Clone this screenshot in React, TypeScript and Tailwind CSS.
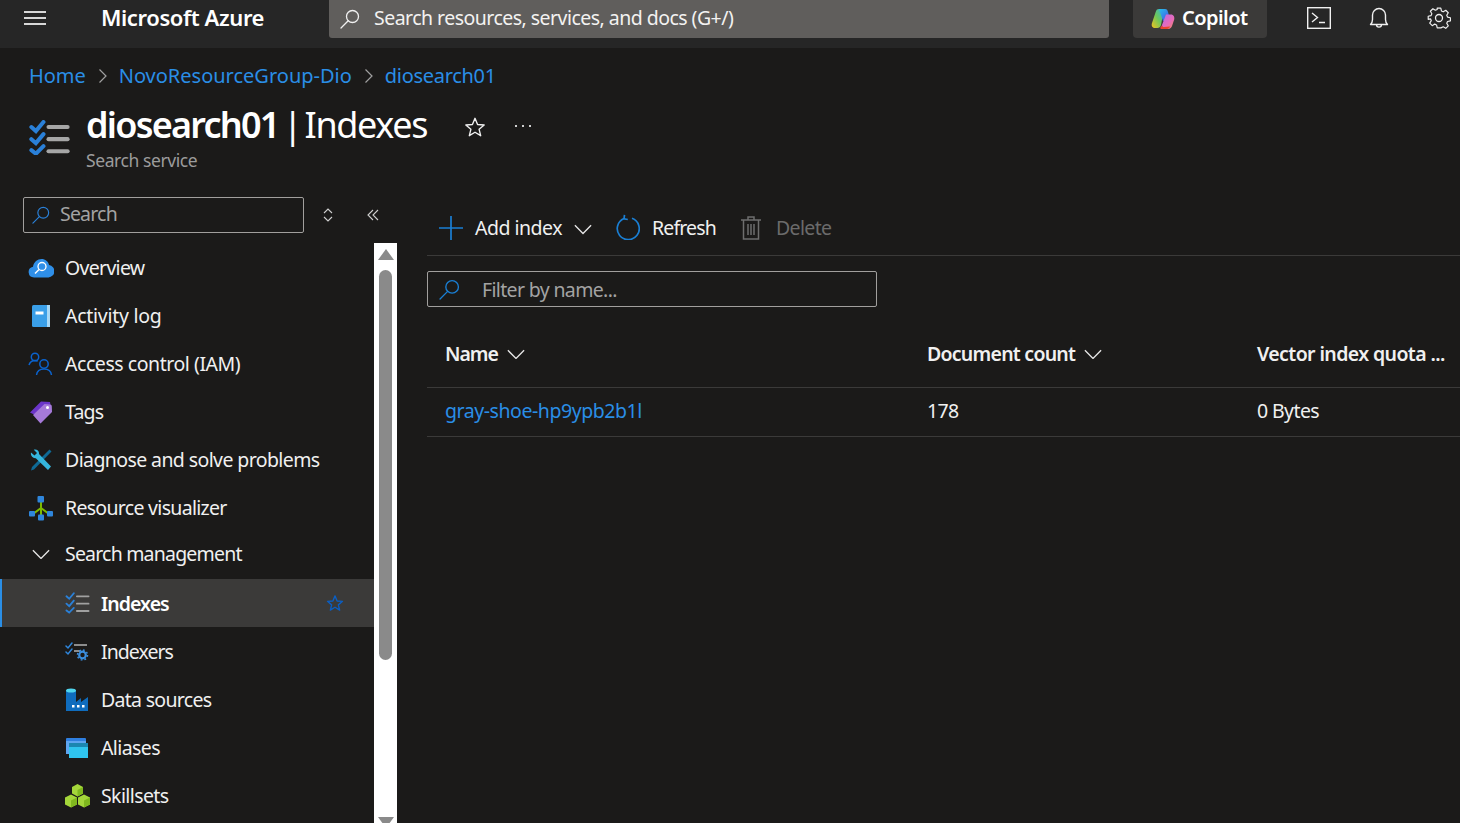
import { ReactNode } from 'react'

const font = { fontFamily: '"Noto Sans", "Open Sans", sans-serif' }

function SearchGlass({ color, size = 20 }: { color: string; size?: number }) {
  return (
    <svg width={size} height={size} viewBox="0 0 20 20" fill="none" stroke={color} strokeWidth="1.3">
      <circle cx="12.5" cy="7.5" r="6" />
      <path d="M8.2 11.8 1 19" strokeLinecap="round" />
    </svg>
  )
}

function Chevron({ size = 18, className = '' }: { size?: number; className?: string }) {
  return (
    <svg width={size} height={size * 0.6} viewBox="0 0 20 12" fill="none" stroke="#e6e6e6" strokeWidth="1.5" className={className}>
      <path d="M1 1.5 10 10.5 19 1.5" />
    </svg>
  )
}

function ChecklistIcon({ w, bar, check, weight = 4 }: { w: number; bar: string; check: string; weight?: number }) {
  return (
    <svg width={w} height={w * 0.86} viewBox="0 0 40 35" fill="none">
      <g stroke={check} strokeWidth={weight} strokeLinecap="round">
        <path d="M2 7 6.500 11 14 2" />
        <path d="M2 19 6.500 23 14 14" />
        <path d="M2 30 6.500 33.500 14 26" />
      </g>
      <g stroke={bar} strokeWidth={weight} strokeLinecap="round">
        <path d="M19 7H38" />
        <path d="M19 19H38" />
        <path d="M19 31H38" />
      </g>
    </svg>
  )
}

const OverviewIcon = (
  <svg width="26" height="20" viewBox="0 0 26 20">
    <path d="M6 19.5a5.4 5.4 0 0 1-1-10.7C5.8 4 9.5 1 13.500 1c3.800 0 6.800 2.500 7.600 6a6.300 6.300 0 0 1-.6 12.500Z" fill="#2f8fe8" />
    <circle cx="14" cy="8.500" r="4" fill="none" stroke="#fff" strokeWidth="1.300" />
    <path d="M11 11.500 7 15.500" stroke="#fff" strokeWidth="1.500" />
  </svg>
)

const ActivityIcon = (
  <svg width="20" height="24" viewBox="0 0 20 24">
    <rect x="1" y="1" width="18" height="22" rx="1.500" fill="#3a9fe8" />
    <rect x="16" y="1" width="3" height="22" fill="#a8d8f5" />
    <rect x="4.500" y="7.500" width="8" height="3" fill="#fff" />
  </svg>
)

const AccessIcon = (
  <svg width="26" height="24" viewBox="0 0 26 24" fill="none" stroke="#0b63ce" strokeWidth="1.500">
    <circle cx="7" cy="5" r="3.700" />
    <path d="M1 13c1-3 3-4.500 6-4.500 1 0 2 .2 2.800.6" />
    <circle cx="16" cy="12" r="4.200" />
    <path d="M8.500 23c.5-3.800 3.500-6 7.500-6s7 2.200 7.500 6" />
  </svg>
)

const TagsIcon = (
  <svg width="24" height="24" viewBox="0 0 24 24">
    <path d="M1 12.500 12 1.500l9 .5.500 3L10 17Z" fill="#6b35c9" />
    <path d="M4 15 15.500 4l5.500.500c1.500 0 1.800 1 1.800 2l.2 5.500L11.500 23.500Z" fill="#a67ad9" />
    <circle cx="18.500" cy="7.500" r="1.500" fill="#fff" />
  </svg>
)

const DiagnoseIcon = (
  <svg width="22" height="22" viewBox="0 0 22 22">
    <path d="M19.500 .500 21.500 2.500 4 20.500 1 21.500 2 18Z" fill="#0f6a96" />
    <path d="M1 3.500 4.500 6.500 7 4 3.800 .800C6.500-.2 9.500 2 9 5L21 17.500 18 21 5.800 9.200C3 9.800 .2 6.500 1 3.500Z" fill="#35b6dd" />
  </svg>
)

const VisualizerIcon = (
  <svg width="26" height="26" viewBox="0 0 26 26">
    <path d="M13 6V20M13 13 5 19M13 13 21 19" stroke="#7fba00" strokeWidth="2" fill="none" />
    <rect x="9.500" y="1" width="6.500" height="6.500" rx="1" fill="#2f86dc" />
    <rect x="1" y="16" width="6" height="5.500" rx="1" fill="#2f86dc" />
    <rect x="10" y="19.500" width="6" height="6" rx="1" fill="#2f86dc" />
    <rect x="19" y="16" width="6" height="5.500" rx="1" fill="#2f86dc" />
  </svg>
)

const IndexersIcon = (
  <svg width="24" height="20" viewBox="0 0 24 20" fill="none">
    <path d="M1 4 3 6 7 1M1 10 3 12 7 7" stroke="#2f86dc" strokeWidth="1.500" strokeLinecap="round" />
    <path d="M9 3H22M9 9H15" stroke="#8c8c8c" strokeWidth="2" />
    <circle cx="17.500" cy="13" r="3.300" stroke="#3b8fe0" strokeWidth="2.200" />
    <circle cx="17.500" cy="13" r="5" stroke="#3b8fe0" strokeWidth="1.500" strokeDasharray="1.800 2.100" />
  </svg>
)

const DataSourcesIcon = (
  <svg width="24" height="24" viewBox="0 0 24 24">
    <rect x="1" y="2" width="10" height="21" fill="#0f6cbd" />
    <ellipse cx="6" cy="2.500" rx="5" ry="2" fill="#50d5ee" />
    <path d="M1 23V14H11L16 10V14L23 9V23Z" fill="#0f6cbd" />
    <rect x="7" y="17" width="2.500" height="2.500" fill="#fff" />
    <rect x="12" y="17" width="2.500" height="2.500" fill="#fff" />
    <rect x="17" y="17" width="2.500" height="2.500" fill="#fff" />
  </svg>
)

const AliasesIcon = (
  <svg width="24" height="22" viewBox="0 0 24 22">
    <rect x="1" y="1" width="20" height="16" rx="1" fill="#2f7fe0" />
    <rect x="1" y="4" width="20" height="13" fill="#5ea5ef" />
    <rect x="4" y="6" width="19" height="15" fill="#2fc4ee" />
    <rect x="4" y="6" width="19" height="4" fill="#1b86b0" />
  </svg>
)

const SkillsetsIcon = (
  <svg width="25" height="24" viewBox="0 0 25 24">
    <path d="M12.500 0 18 3V9.500L12.500 12.500 7 9.500V3Z" fill="#a4d63a" />
    <path d="M12.500 6 18 3V9.500L12.500 12.500Z" fill="#7fb81e" />
    <path d="M6 10.500 12 13.500V20.500L6 23.500 0 20.500V13.500Z" fill="#a4d63a" />
    <path d="M6 16.500 12 13.500V20.500L6 23.500Z" fill="#7fb81e" />
    <path d="M19 10.500 25 13.500V20.500L19 23.500 13 20.500V13.500Z" fill="#a4d63a" />
    <path d="M19 16.500 25 13.500V20.500L19 23.500Z" fill="#7fb81e" />
  </svg>
)

function CopilotIcon() {
  return (
    <svg width="24" height="22" viewBox="0 0 24 22">
      <defs>
        <linearGradient id="cpA" x1="0" y1="0" x2="1" y2="1">
          <stop offset="0" stopColor="#27c0e8" />
          <stop offset="0.6" stopColor="#3b78e8" />
          <stop offset="1" stopColor="#3a3fc0" />
        </linearGradient>
        <linearGradient id="cpB" x1="0" y1="0" x2="1" y2="1">
          <stop offset="0" stopColor="#b86be8" />
          <stop offset="0.6" stopColor="#e86bb8" />
          <stop offset="1" stopColor="#f08a5a" />
        </linearGradient>
        <linearGradient id="cpC" x1="0" y1="1" x2="1" y2="0">
          <stop offset="0" stopColor="#f2c21f" />
          <stop offset="0.5" stopColor="#6cc75a" />
          <stop offset="1" stopColor="#2fb4e0" />
        </linearGradient>
      </defs>
      <path d="M8 1h5l-3 16c-.4 2-2 3-3.500 3H4C1 20 .2 17.500 1 15L4.500 4.500C5.200 2 6 1 8 1Z" fill="url(#cpC)" />
      <path d="M8 1h6c2 0 2.500 1 3 3l2.500 9H12Z" fill="url(#cpA)" />
      <path d="M15 6.500h5c2.500 0 3.800 2.500 3.200 5l-2 6c-.7 2-2 3.500-4 3.500H12c-2 0-2-1.500-1.200-3.500Z" fill="url(#cpB)" />
      <path d="M10 21h6c1.500 0 2.500-1 3-2.500l-6 .5c-1 0-1.500-.5-1.700-1.500L9.500 19c-.3 1 0 2 .5 2Z" fill="#e8432f" />
    </svg>
  )
}

type Item = { label: string; icon: ReactNode; track: string }

const topItems: Item[] = [
  { label: 'Overview', icon: OverviewIcon, track: 'tracking-[-0.7px]' },
  { label: 'Activity log', icon: ActivityIcon, track: 'tracking-[-0.27px]' },
  { label: 'Access control (IAM)', icon: AccessIcon, track: 'tracking-[-0.45px]' },
  { label: 'Tags', icon: TagsIcon, track: 'tracking-[-0.8px]' },
  { label: 'Diagnose and solve problems', icon: DiagnoseIcon, track: 'tracking-[-0.6px]' },
  { label: 'Resource visualizer', icon: VisualizerIcon, track: 'tracking-[-0.7px]' },
]

const subItems: Item[] = [
  { label: 'Indexers', icon: IndexersIcon, track: 'tracking-[-0.95px]' },
  { label: 'Data sources', icon: DataSourcesIcon, track: 'tracking-[-0.7px]' },
  { label: 'Aliases', icon: AliasesIcon, track: 'tracking-[-0.6px]' },
  { label: 'Skillsets', icon: SkillsetsIcon, track: 'tracking-[-0.6px]' },
]

function NavRow({ item, indent }: { item: Item; indent?: boolean }) {
  return (
    <div className={`h-12 shrink-0 flex items-center ${indent ? 'pl-[64px]' : 'pl-[28px]'}`}>
      <span className="w-[26px] mr-[11px] flex items-center justify-center">{item.icon}</span>
      <span className={`text-[19.500px] text-[#f0f0f0] ${item.track}`}>{item.label}</span>
    </div>
  )
}

export default function App() {
  return (
    <div className="w-[1460px] h-[823px] overflow-hidden flex flex-col bg-[#1b1a19] text-white" style={font}>
      {/* top bar */}
      <div className="h-12 shrink-0 bg-[#262626] flex items-start">
        <div className="w-[24px]" />
        <div className="w-[22px] h-[14px] mt-[11px] flex flex-col justify-between">
          <div className="h-[2px] bg-[#d8d8d8]" />
          <div className="h-[2px] bg-[#d8d8d8]" />
          <div className="h-[2px] bg-[#d8d8d8]" />
        </div>
        <div className="w-[55px]" />
        <div className="w-[228px] h-[38px] pb-[3px] flex items-center text-[22px] tracking-[-0.4px] font-semibold">Microsoft Azure</div>
        <div className="w-[780px] h-[38px] bg-[#605e5c] rounded-b-[3px] flex items-center pl-[11px]">
          <SearchGlass color="#f0f0f0" size={20} />
          <span className="ml-[14px] pb-[2px] text-[19.500px] tracking-[-0.53px] text-[#f3f2f1]">Search resources, services, and docs (G+/)</span>
        </div>
        <div className="w-[24px]" />
        <div className="w-[134px] h-[38px] bg-[#3b3a39] rounded-b-[4px] flex items-center pl-[18px]">
          <CopilotIcon />
          <span className="ml-[7px] pb-[2px] text-[20px] tracking-[-0.55px] font-semibold">Copilot</span>
        </div>
        <div className="w-[40px]" />
        <svg width="24" height="22" viewBox="0 0 24 22" fill="none" stroke="#f0f0f0" strokeWidth="1.400" className="mt-[7px]">
          <rect x=".7" y=".7" width="22.600" height="20.600" />
          <path d="M5 6 10.500 10.500 5 15M12 15.500H18" />
        </svg>
        <div className="w-[36px]" />
        <svg width="24" height="24" viewBox="0 0 24 24" fill="none" stroke="#f0f0f0" strokeWidth="1.400" className="mt-[6px]">
          <path d="M3.500 18.500c1.500-1.500 2-2.500 2-5V9a6.500 6.500 0 0 1 13 0v4.500c0 2.500.5 3.500 2 5ZM9.500 18.500c0 3.500 5 3.500 5 0" strokeLinejoin="round" />
        </svg>
        <div className="w-[36px]" />
        <svg width="24" height="24" viewBox="0 0 24 24" fill="none" stroke="#f0f0f0" strokeWidth="1.300" className="mt-[6px]">
          <circle cx="12" cy="12" r="3.500" />
          <path d="M10 1h4l.7 3.200 2 .9 2.800-1.700 2.800 2.800-1.700 2.800.9 2 3.200.7v3.500l-3.200.7-.9 2 1.700 2.800-2.800 2.800-2.800-1.700-2 .9L14 23h-4l-.7-3.300-2-.9-2.800 1.700-2.800-2.800 1.700-2.800-.9-2L0 13.500V10l3.200-.7.9-2-1.700-2.800 2.800-2.800 2.800 1.700 2-.9Z" transform="translate(1.200 1.200) scale(.9)" strokeLinejoin="round" />
        </svg>
      </div>

      {/* breadcrumb */}
      <div className="h-[56px] shrink-0 flex items-center pl-[29px] text-[20px] text-[#2a8ee6]">
        <span className="tracking-[-0.05px]">Home</span>
        <svg width="10" height="16" viewBox="0 0 10 16" fill="none" stroke="#a0a0a0" strokeWidth="1.200" className="ml-[12px] mr-[11px]"><path d="M1.500 1.500 8 8 1.500 14.500" /></svg>
        <span>NovoResourceGroup-Dio</span>
        <svg width="10" height="16" viewBox="0 0 10 16" fill="none" stroke="#a0a0a0" strokeWidth="1.200" className="ml-[12px] mr-[11px]"><path d="M1.500 1.500 8 8 1.500 14.500" /></svg>
        <span className="tracking-[-0.3px]">diosearch01</span>
      </div>

      {/* title */}
      <div className="h-[93px] shrink-0 flex items-start pl-[29px]">
        <div className="w-[57px] pt-[16px]">
          <ChecklistIcon w={41} bar="#a6a6a6" check="#2a80d8" />
        </div>
        <div>
          <div className="h-[42px] flex items-center text-[36px] leading-none">
            <span className="font-semibold tracking-[-1.75px]">diosearch01</span>
            <span className="ml-[4px]">|</span>
            <span className="ml-[2px] tracking-[-1.35px]">Indexes</span>
          </div>
          <div className="mt-[1px] text-[17.500px] tracking-[-0.42px] text-[#9c9c9c]">Search service</div>
        </div>
        <svg width="22" height="22" viewBox="0 0 24 24" fill="none" stroke="#f0f0f0" strokeWidth="1.500" className="ml-[37px] mt-[12px]">
          <path d="M12 2.500 14.800 9.300 22 9.800 16.500 14.500 18.200 21.500 12 17.700 5.800 21.500 7.500 14.500 2 9.800 9.200 9.300Z" strokeLinejoin="round" />
        </svg>
        <div className="ml-[29px] mt-[21px] flex gap-[5px]">
          <span className="w-[2px] h-[2px] bg-[#d0d0d0]" />
          <span className="w-[2px] h-[2px] bg-[#d0d0d0]" />
          <span className="w-[2px] h-[2px] bg-[#d0d0d0]" />
        </div>
      </div>

      <div className="flex-1 min-h-0 flex">
        {/* sidebar */}
        <div className="w-[397px] shrink-0 flex flex-col">
          <div className="h-[46px] shrink-0 flex items-start pl-[23px]">
            <div className="w-[281px] h-[36px] border border-[#a19f9d] rounded-[2px] flex items-center pl-[8px]">
              <SearchGlass color="#2a80d8" size={18} />
              <span className="ml-[10px] pb-[2px] text-[19.500px] tracking-[-0.8px] text-[#a3a3a3]">Search</span>
            </div>
            <svg width="10" height="14" viewBox="0 0 10 14" fill="none" stroke="#d0d0d0" strokeWidth="1.100" className="ml-[19px] mt-[11px]">
              <path d="M1 5 5 1 9 5M1 9 5 13 9 9" />
            </svg>
            <svg width="12" height="12" viewBox="0 0 12 12" fill="none" stroke="#d0d0d0" strokeWidth="1.100" className="ml-[34px] mt-[12px]">
              <path d="M6 1 1 6 6 11M11 1 6 6 11 11" />
            </svg>
          </div>
          <div className="flex-1 min-h-0 flex">
            <div className="w-[374px] shrink-0 flex flex-col overflow-hidden">
              <div className="h-px shrink-0" />
              {topItems.map(item => <NavRow key={item.label} item={item} />)}
              <div className="h-[47px] shrink-0 pb-[3px] flex items-center pl-[32px]">
                <Chevron size={18} />
                <span className="ml-[15px] text-[19.500px] tracking-[-0.8px] text-[#f0f0f0]">Search management</span>
              </div>
              <div className="h-12 shrink-0 bg-[#3b3a39] border-l-2 border-[#2a8ee6] flex items-center pl-[62px]">
                <span className="w-[26px] mr-[11px] flex items-center justify-center">
                  <ChecklistIcon w={25} bar="#a0a0a0" check="#2a80d8" weight={3} />
                </span>
                <span className="flex-1 pt-[2px] text-[19.500px] tracking-[-0.95px] font-semibold text-white">Indexes</span>
                <svg width="18" height="18" viewBox="0 0 24 24" fill="none" stroke="#0b5ec2" strokeWidth="1.800" className="mr-[30px]">
                  <path d="M12 2.500 14.800 9.300 22 9.800 16.500 14.500 18.200 21.500 12 17.700 5.800 21.500 7.500 14.500 2 9.800 9.200 9.300Z" strokeLinejoin="round" />
                </svg>
              </div>
              <div className="h-px shrink-0" />
              {subItems.map(item => <NavRow key={item.label} item={item} indent />)}
            </div>
            {/* scrollbar */}
            <div className="w-[23px] shrink-0 overflow-hidden bg-white flex flex-col items-center">
              <div className="mt-[6px] shrink-0 w-0 h-0 border-x-[8px] border-x-transparent border-b-[11px] border-b-[#8a8a8a]" />
              <div className="mt-[10px] shrink-0 w-[13px] h-[390px] rounded-full bg-[#8a8a8a]" />
              <div className="mt-[157px] shrink-0 w-0 h-0 border-x-[8px] border-x-transparent border-t-[11px] border-t-[#8a8a8a]" />
            </div>
          </div>
        </div>

        <div className="w-[30px] shrink-0" />

        {/* main */}
        <div className="flex-1 min-w-0 flex flex-col">
          <div className="h-[59px] shrink-0 border-b border-[#3b3a39] flex items-start text-[19.500px]">
            <svg width="24" height="24" viewBox="0 0 24 24" stroke="#1a7fd4" strokeWidth="1.700" fill="none" className="ml-[12px] mt-[19px]">
              <path d="M12 0V24M0 12H24" />
            </svg>
            <span className="ml-[12px] mt-[16px] tracking-[-0.5px] text-[#f0f0f0]">Add index</span>
            <Chevron size={18} className="ml-[12px] mt-[27px]" />
            <svg width="24" height="26" viewBox="0 0 24 26" fill="none" stroke="#1a7fd4" strokeWidth="1.700" className="ml-[24px] mt-[17px]">
              <path d="M8 4.500a11 11 0 1 0 8-.2M8.500 .8 8 4.800l3.800.7" />
            </svg>
            <span className="ml-[12px] mt-[16px] tracking-[-0.85px] text-[#f0f0f0]">Refresh</span>
            <svg width="20" height="24" viewBox="0 0 20 24" fill="none" stroke="#6e6e6e" strokeWidth="1.500" className="ml-[25px] mt-[19px]">
              <path d="M0 4H20M7 4V1H13V4M2.500 4V23H17.500V4M7 8V19M10 8V19M13 8V19" />
            </svg>
            <span className="ml-[15px] mt-[16px] tracking-[-0.65px] text-[#6b6b6b]">Delete</span>
          </div>
          <div className="h-[15px] shrink-0" />
          <div className="w-[450px] h-[36px] shrink-0 border border-[#a19f9d] rounded-[2px] flex items-center pl-[11px]">
            <SearchGlass color="#1a7fd4" size={21} />
            <span className="ml-[22px] pt-[2px] text-[19.500px] tracking-[-0.65px] text-[#a3a3a3]">Filter by name...</span>
          </div>
          <div className="h-[81px] shrink-0 pt-[14px] border-b border-[#3b3a39] flex items-center text-[19.500px] font-semibold text-[#f0f0f0]">
            <div className="w-[500px] pl-[18px] flex items-center">
              <span className="tracking-[-1px]">Name</span>
              <Chevron size={18} className="ml-[9px]" />
            </div>
            <div className="w-[330px] flex items-center">
              <span className="tracking-[-0.75px]">Document count</span>
              <Chevron size={18} className="ml-[9px]" />
            </div>
            <span className="whitespace-nowrap tracking-[-0.6px]">Vector index quota ...</span>
          </div>
          <div className="h-[49px] shrink-0 pb-[2px] border-b border-[#3b3a39] flex items-center text-[19.500px] tracking-[-0.6px] text-[#f0f0f0]">
            <div className="w-[500px] pl-[18px] tracking-[-0.45px] text-[#2a8ee6]">gray-shoe-hp9ypb2b1l</div>
            <div className="w-[330px]">178</div>
            <span>0 Bytes</span>
          </div>
        </div>
      </div>
    </div>
  )
}
